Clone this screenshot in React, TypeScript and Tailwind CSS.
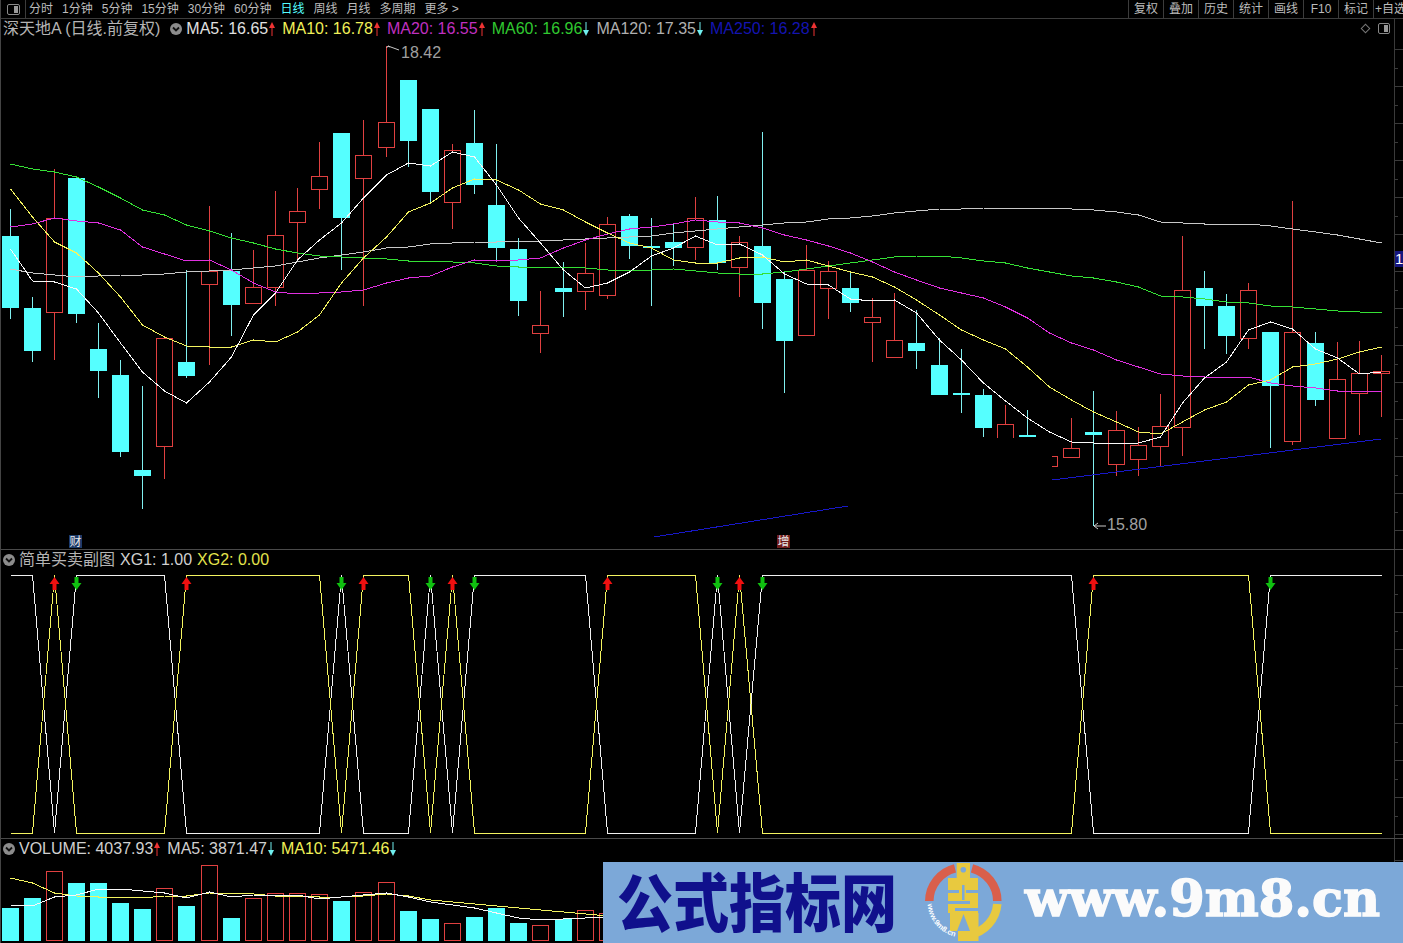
const FONT = "font-['Liberation_Sans','Noto_Sans_CJK_SC',sans-serif]";

const cx = (i: number) => Math.floor(10 + 22.12 * i) + 0.5;

// top, bottom, wick top, wick bottom, up
type Candle = [number, number, number, number, number];
const candles: Candle[] = [
  [236, 308, 209, 319, 0], [308, 351, 297, 362, 0], [218, 312, 169, 360, 1], [178, 314, 178, 323, 0],
  [349, 371, 323, 398, 0], [375, 452, 360, 457, 0], [470, 476, 386, 509, 0], [338, 446, 338, 479, 1],
  [362, 376, 270, 378, 0], [271, 284, 206, 365, 1], [271, 305, 233, 336, 0], [287, 303, 250, 303, 1],
  [235, 287, 191, 306, 1], [211, 222, 188, 259, 1], [176, 189, 142, 209, 1], [133, 218, 133, 270, 0],
  [155, 178, 120, 306, 1], [122, 147, 46, 157, 1], [80, 141, 80, 167, 0], [109, 192, 109, 203, 0],
  [150, 202, 144, 229, 1], [143, 185, 110, 194, 0], [205, 248, 144, 260, 0], [249, 301, 238, 316, 0],
  [325, 333, 291, 353, 1], [288, 292, 262, 317, 0], [273, 291, 243, 310, 1], [224, 295, 217, 299, 1],
  [216, 246, 214, 259, 0], [246, 248, 218, 306, 0], [242, 248, 224, 266, 0], [218, 247, 197, 260, 1],
  [220, 263, 196, 270, 0], [242, 267, 236, 297, 1], [246, 303, 132, 329, 0], [279, 341, 272, 393, 0],
  [270, 335, 245, 335, 1], [271, 288, 261, 319, 1], [288, 303, 272, 312, 0], [317, 322, 298, 362, 1],
  [340, 357, 293, 357, 1], [343, 351, 310, 369, 0], [365, 395, 338, 395, 0], [393, 395, 349, 413, 0],
  [395, 428, 389, 437, 0], [424, 450, 405, 450, 1], [435, 437, 410, 437, 0], [456, 466, 456, 466, 1],
  [448, 457, 418, 457, 1], [432, 435, 391, 526, 0], [430, 464, 411, 476, 1], [445, 459, 427, 476, 1],
  [426, 446, 394, 467, 1], [290, 427, 236, 456, 1], [288, 306, 271, 349, 0], [306, 336, 294, 354, 0],
  [290, 338, 283, 349, 1], [332, 386, 332, 448, 0], [332, 441, 201, 445, 1], [343, 400, 332, 406, 0],
  [379, 438, 342, 438, 1], [373, 393, 341, 435, 1], [371, 373, 355, 417, 1],
];

const ma5 = [249, 281, 282, 289, 313, 343, 372, 391, 403, 382, 357, 315, 293, 260, 240, 223, 198, 175, 163, 166, 152, 157, 185, 218, 243, 270, 288, 283, 272, 256, 248, 236, 245, 244, 255, 274, 284, 285, 299, 301, 300, 313, 340, 360, 383, 401, 418, 432, 442, 443, 444, 443, 437, 403, 378, 362, 330, 322, 329, 349, 358, 374, 372];
const ma10 = [189, 217, 242, 253, 273, 297, 325, 337, 346, 347, 347, 340, 342, 332, 315, 283, 258, 237, 212, 203, 188, 179, 180, 190, 204, 210, 222, 233, 243, 248, 260, 263, 263, 258, 257, 262, 260, 266, 272, 277, 287, 300, 315, 330, 340, 349, 367, 387, 400, 412, 422, 432, 434, 422, 410, 402, 385, 380, 367, 364, 359, 352, 347];
const ma20 = [227, 224, 218, 221, 223, 230, 247, 254, 261, 260, 270, 283, 292, 294, 293, 292, 290, 283, 278, 276, 267, 260, 261, 260, 258, 248, 240, 234, 229, 227, 224, 220, 222, 223, 228, 235, 240, 246, 253, 262, 272, 280, 288, 293, 298, 307, 318, 333, 343, 350, 360, 367, 374, 376, 377, 377, 377, 383, 386, 388, 391, 391, 391];
const ma60 = [164, 169, 172, 177, 187, 198, 210, 215, 225, 231, 238, 243, 249, 253, 256, 257, 258, 259, 261, 261, 262, 263, 266, 267, 267, 267, 268, 270, 271, 270, 269, 271, 273, 274, 274, 272, 269, 266, 263, 260, 257, 256, 256, 258, 261, 263, 268, 272, 276, 278, 282, 287, 296, 297, 299, 302, 303, 306, 307, 309, 311, 312, 313];
const ma120 = [269, 273, 275, 277, 276, 275, 275, 274, 272, 271, 270, 268, 266, 262, 258, 255, 252, 248, 247, 244, 243, 242, 242, 241, 241, 240, 239, 238, 237, 236, 233, 231, 229, 227, 225, 223, 222, 219, 218, 216, 213, 211, 209, 209, 208, 208, 208, 208, 209, 210, 212, 215, 222, 223, 224, 224, 224, 226, 229, 232, 235, 239, 243];

// XG1 state per bar, XG2 is the opposite
const xg1 = [1, 1, 0, 1, 1, 1, 1, 1, 0, 0, 0, 0, 0, 0, 0, 1, 0, 0, 0, 1, 0, 1, 1, 1, 1, 1, 1, 0, 0, 0, 0, 0, 1, 0, 1, ...Array(14).fill(1), 0, 0, 0, 0, 0, 0, 0, 0, 1, 1, 1, 1, 1, 1];
const signals: [number, number][] = [[2, 1], [3, 0], [8, 1], [15, 0], [16, 1], [19, 0], [20, 1], [21, 0], [27, 1], [32, 0], [33, 1], [34, 0], [49, 1], [57, 0]];

const volumes: [number, number][] = [
  [908, 0], [898, 0], [871, 1], [883, 0], [883, 0], [903, 0], [909, 0], [888, 1], [906, 0], [865, 1],
  [918, 0], [898, 1], [893, 1], [893, 1], [894, 1], [901, 0], [892, 1], [882, 1], [911, 0], [919, 0],
  [923, 1], [917, 0], [908, 0], [923, 0], [925, 1], [919, 0], [910, 1], [913, 1],
];
const volMa5 = [905, 906, 897, 895, 889, 889, 891, 893, 898, 892, 897, 895, 895, 895, 899, 897, 895, 893, 897, 902, 905, 908, 913, 918, 920, 919, 918, 917];
const volMa10 = [878, 883, 893, 896, 897, 897, 898, 896, 896, 893, 893, 894, 896, 896, 897, 897, 896, 894, 896, 900, 902, 904, 906, 908, 910, 912, 914, 916];

const pts = (ys: number[]) => ys.map((y, i) => `${cx(i)},${y}`).join(" ");

function Line({ ys, color }: { ys: number[]; color: string }) {
  return <polyline points={pts(ys)} fill="none" stroke={color} strokeWidth={1} shapeRendering="crispEdges" />;
}

function Ticks({ from, to }: { from: number; to: number }) {
  const rows: number[] = [];
  for (let y = from; y < to; y += 18.5) rows.push(Math.round(y) + 0.5);
  return (
    <g stroke="#3a3a3a" shapeRendering="crispEdges">
      <line x1={1394.5} x2={1394.5} y1={to} y2={from - 40} />
      {rows.map((y, i) => (
        <line key={y} x1={1395} x2={i % 2 ? 1398 : 1403} y1={y} y2={y} />
      ))}
    </g>
  );
}

function Arrow({ up, color }: { up?: boolean; color: string }) {
  return (
    <svg width="6" height="14" viewBox="0 0 6 14" className="ml-px shrink-0">
      <rect x="2.5" y={up ? 4 : 0} width="1" height="10" fill={color} />
      <path d={up ? "M3 0 L6 6 L0 6 Z" : "M3 14 L6 8 L0 8 Z"} fill={color} />
    </svg>
  );
}

function Chevron() {
  return (
    <svg width="12" height="12" viewBox="0 0 12 12" className="shrink-0">
      <circle cx="6" cy="6" r="6" fill="#8c8c8c" />
      <path d="M3 4.5 L6 7.5 L9 4.5" fill="none" stroke="#111" strokeWidth="1.8" />
    </svg>
  );
}

function Value({ text, color, arrow, arrowColor }: { text: string; color: string; arrow?: "up" | "down"; arrowColor?: string }) {
  return (
    <span className="flex items-center mr-[7px]">
      <span className={`whitespace-pre ${color}`}>{text}</span>
      {arrow && <Arrow up={arrow === "up"} color={arrowColor ?? "#ee3333"} />}
    </span>
  );
}

function TopBar() {
  const left = ["分时", "1分钟", "5分钟", "15分钟", "30分钟", "60分钟", "日线", "周线", "月线", "多周期", "更多 >"];
  const right = ["复权", "叠加", "历史", "统计", "画线", "F10", "标记"];
  return (
    <div className="flex h-[19px] items-center border-b border-[#3c3c3c] text-[12px] text-[#bcbcbc]">
      <div className="flex h-full w-[26px] items-center justify-center border-r border-[#3c3c3c] pl-px">
        <div className="flex h-[11px] w-[13px] justify-end rounded-[2px] border border-[#8a8a8a] p-px">
          <div className="w-[4px] bg-[#9a9a9a]" />
        </div>
      </div>
      <div className="ml-[3px] flex gap-[9px]">
        {left.map((t) => (
          <span key={t} className={`whitespace-pre ${t === "日线" ? "text-[#55ffff]" : ""}`}>{t}</span>
        ))}
      </div>
      <div className="ml-auto flex h-full">
        {right.map((t) => (
          <span key={t} className="flex w-[35px] items-center justify-center border-l border-[#3c3c3c]">{t}</span>
        ))}
        <span className="w-[30px] overflow-hidden whitespace-nowrap border-l border-[#3c3c3c] pl-px">+自选</span>
      </div>
    </div>
  );
}

function MainPanel() {
  return (
    <div className="relative h-[531px] border-b border-[#4a4a4a]">
      <svg className="absolute inset-0" width="1403" height="530" viewBox="0 19 1403 530">
        <Ticks from={49} to={549} />
        <g shapeRendering="crispEdges">
          {candles.map(([top, bottom, wt, wb, up], i) => {
            const x = cx(i);
            const c = up ? "#e04040" : "#55ffff";
            return (
              <g key={i}>
                <line x1={x} x2={x} y1={wt} y2={wb} stroke={up ? c : "#80f0f0"} />
                {up ? (
                  <rect x={x - 8} y={top + 0.5} width={16} height={bottom - top} fill="#000" stroke={c} />
                ) : (
                  <rect x={x - 8.5} y={top} width={17} height={Math.max(bottom - top, 2)} fill={c} />
                )}
              </g>
            );
          })}
          <rect x={995} y={438} width={57} height={60} fill="#000" />
        </g>
        <g>
          <Line ys={ma120} color="#c8c8c8" />
          <Line ys={ma60} color="#35e035" />
          <Line ys={ma20} color="#e030e0" />
          <Line ys={ma10} color="#f4f460" />
          <Line ys={ma5} color="#f8f8f8" />
          <line x1={1052} y1={480} x2={1381} y2={439} stroke="#1818c8" shapeRendering="crispEdges" />
          <line x1={654} y1={537} x2={848} y2={506} stroke="#1818c8" shapeRendering="crispEdges" />
        </g>
        <g stroke="#c8c8c8" fill="none">
          <path d="M386.5 48 L388 46 L390 47 M388 46 L399 50" />
          <path d="M1094 526 L1106 526 M1094 526 L1098 523 M1094 526 L1098 529" />
        </g>
        <g className={FONT} fontSize="16" fill="#a0a0a0">
          <text x={401} y={58}>18.42</text>
          <text x={1107} y={530}>15.80</text>
        </g>
      </svg>

      <div className="relative flex h-5 items-center pl-[3px] text-[16px]">
        <span className="mr-[10px] whitespace-pre text-[#b4b4b4]">深天地A (日线.前复权)</span>
        <Chevron />
        <div className="ml-[4px] flex items-center">
          <Value text="MA5: 16.65" color="text-[#e0e0e0]" arrow="up" />
          <Value text="MA10: 16.78" color="text-[#f0f058]" arrow="up" />
          <Value text="MA20: 16.55" color="text-[#c030c0]" arrow="up" />
          <Value text="MA60: 16.96" color="text-[#30c830]" arrow="down" arrowColor="#70eeee" />
          <Value text="MA120: 17.35" color="text-[#b0b0b0]" arrow="down" arrowColor="#70eeee" />
          <Value text="MA250: 16.28" color="text-[#1414b0]" arrow="up" />
        </div>
        <div className="absolute left-[1362px] top-[4px] flex items-center gap-[9px]">
          <div className="h-[7px] w-[7px] rotate-45 border border-[#777]" />
          <div className="flex h-[11px] w-[12px] justify-end rounded-[2px] border border-[#888] p-px">
            <div className="w-[4px] bg-[#999]" />
          </div>
        </div>
      </div>

      <div className="absolute left-[1395px] top-[232px] flex h-[16px] w-[8px] items-center overflow-hidden bg-[#16167e] text-[15px] text-white">1</div>
      <span className="absolute left-[69px] top-[516px] flex h-[13px] w-[13px] items-center justify-center bg-[#1c3a68] text-[12px] text-[#e8e8e8]">财</span>
      <span className="absolute left-[777px] top-[516px] flex h-[13px] w-[13px] items-center justify-center bg-[#701c1c] text-[12px] text-[#e8e8e8]">增</span>
    </div>
  );
}

function SignalPanel() {
  const white = xg1.map((v) => (v ? 575 : 833));
  const yellow = xg1.map((v) => (v ? 833 : 575));
  return (
    <div className="relative h-[289px] border-b border-[#4a4a4a]">
      <svg className="absolute inset-0" width="1403" height="288" viewBox="0 550 1403 288">
        <Ticks from={575} to={838} />
        <Line ys={white} color="#f0f0f0" />
        <Line ys={yellow} color="#f4f460" />
        {signals.map(([i, buy]) => {
          const x = cx(i);
          return buy ? (
            <path key={i} d={`M${x} 577 L${x + 5} 584 L${x + 2} 584 L${x + 2} 590 L${x - 2} 590 L${x - 2} 584 L${x - 5} 584 Z`} fill="#f01010" />
          ) : (
            <path key={i} d={`M${x - 2} 577 L${x + 2} 577 L${x + 2} 583 L${x + 5} 583 L${x} 590 L${x - 5} 583 L${x - 2} 583 Z`} fill="#10c010" />
          );
        })}
      </svg>
      <div className="relative flex h-5 items-center pl-[3px] text-[16px]">
        <Chevron />
        <span className="ml-[4px] mr-[5px] text-[#b4b4b4]">简单买卖副图</span>
        <span className="mr-[5px] whitespace-pre text-[#d0d0d0]">XG1: 1.00</span>
        <span className="whitespace-pre text-[#e4e44c]">XG2: 0.00</span>
      </div>
    </div>
  );
}

function VolumePanel() {
  return (
    <div className="relative h-[104px]">
      <svg className="absolute inset-0" width="1403" height="104" viewBox="0 839 1403 104">
        <Ticks from={860} to={943} />
        <g shapeRendering="crispEdges">
          {volumes.map(([top, up], i) =>
            up ? (
              <rect key={i} x={cx(i) - 8} y={top + 0.5} width={16} height={940 - top} fill="#000" stroke="#e04040" />
            ) : (
              <rect key={i} x={cx(i) - 8.5} y={top} width={17} height={941 - top} fill="#55ffff" />
            ),
          )}
        </g>
        <Line ys={volMa10} color="#f4f460" />
        <Line ys={volMa5} color="#f8f8f8" />
      </svg>
      <div className="relative flex h-5 items-center pl-[3px] text-[16px]">
        <Chevron />
        <div className="ml-[4px] flex items-center">
          <Value text="VOLUME: 4037.93" color="text-[#d0d0d0]" arrow="up" />
          <Value text="MA5: 3871.47" color="text-[#d0d0d0]" arrow="down" arrowColor="#70eeee" />
          <Value text="MA10: 5471.46" color="text-[#f0f058]" arrow="down" arrowColor="#70eeee" />
        </div>
      </div>
    </div>
  );
}

function Logo() {
  return (
    <svg width="90" height="81" viewBox="5 4 90 81" className="shrink-0">
      <g fill="none" strokeWidth="8.5">
        <path d="M14.3 43 A34 34 0 0 1 40 10.3" stroke="#d95f4b" />
        <path d="M57 10.3 A34 34 0 0 1 82.3 43" stroke="#d95f4b" />
        <path d="M82.3 46 A34 34 0 0 1 55 76.6" stroke="#e8c93f" />
      </g>
      <path d="M41.7 5 H55 V20 H63 V55 H63.5 V83 H43 V73 H35 V55 H33 V20 H41.7 Z" fill="#e8c93f" />
      <circle cx="48.3" cy="11.7" r="2.8" fill="#7ca8d8" />
      <g fill="#7ca8d8">
        <rect x="33" y="32" width="11" height="3" />
        <rect x="51" y="32" width="12" height="3" />
        <rect x="47" y="27" width="2.5" height="15" />
        <rect x="33" y="43" width="22" height="3" />
        <rect x="40" y="50" width="23" height="3" />
        <path d="M48.5 56 L55 73 H42 Z" />
      </g>
      <defs>
        <path id="logo-arc" d="M12.5 46 A36 36 0 0 0 42 79" />
      </defs>
      <text fontSize="7.5" fontWeight="700" fill="#ffffff" className="font-['Liberation_Sans',sans-serif]">
        <textPath href="#logo-arc">www.9m8.cn</textPath>
      </text>
    </svg>
  );
}

function Banner() {
  return (
    <div className="absolute bottom-0 left-[603px] right-0 top-[862px] flex items-center bg-[#7ca8d8]">
      <span className="mb-[7px] ml-[14px] w-[288px] scale-y-[1.12] whitespace-nowrap font-['Noto_Sans_CJK_SC',sans-serif] text-[56px] font-black leading-none text-[#10108c]">
        公式指标网
      </span>
      <div className="ml-[15px]">
        <Logo />
      </div>
      <span className="mb-[8px] ml-[15px] whitespace-nowrap font-['DejaVu_Serif',serif] text-[51px] font-bold leading-none text-[#fbfbfb] [-webkit-text-stroke:1.5px_#fbfbfb]">
        www.9m8.cn
      </span>
    </div>
  );
}

export default function App() {
  return (
    <div className={`relative h-[943px] w-[1403px] overflow-hidden bg-black ${FONT}`}>
      <TopBar />
      <MainPanel />
      <SignalPanel />
      <VolumePanel />
      <Banner />
      <div className="absolute bottom-0 left-0 top-0 w-px bg-[#444]" />
    </div>
  );
}
